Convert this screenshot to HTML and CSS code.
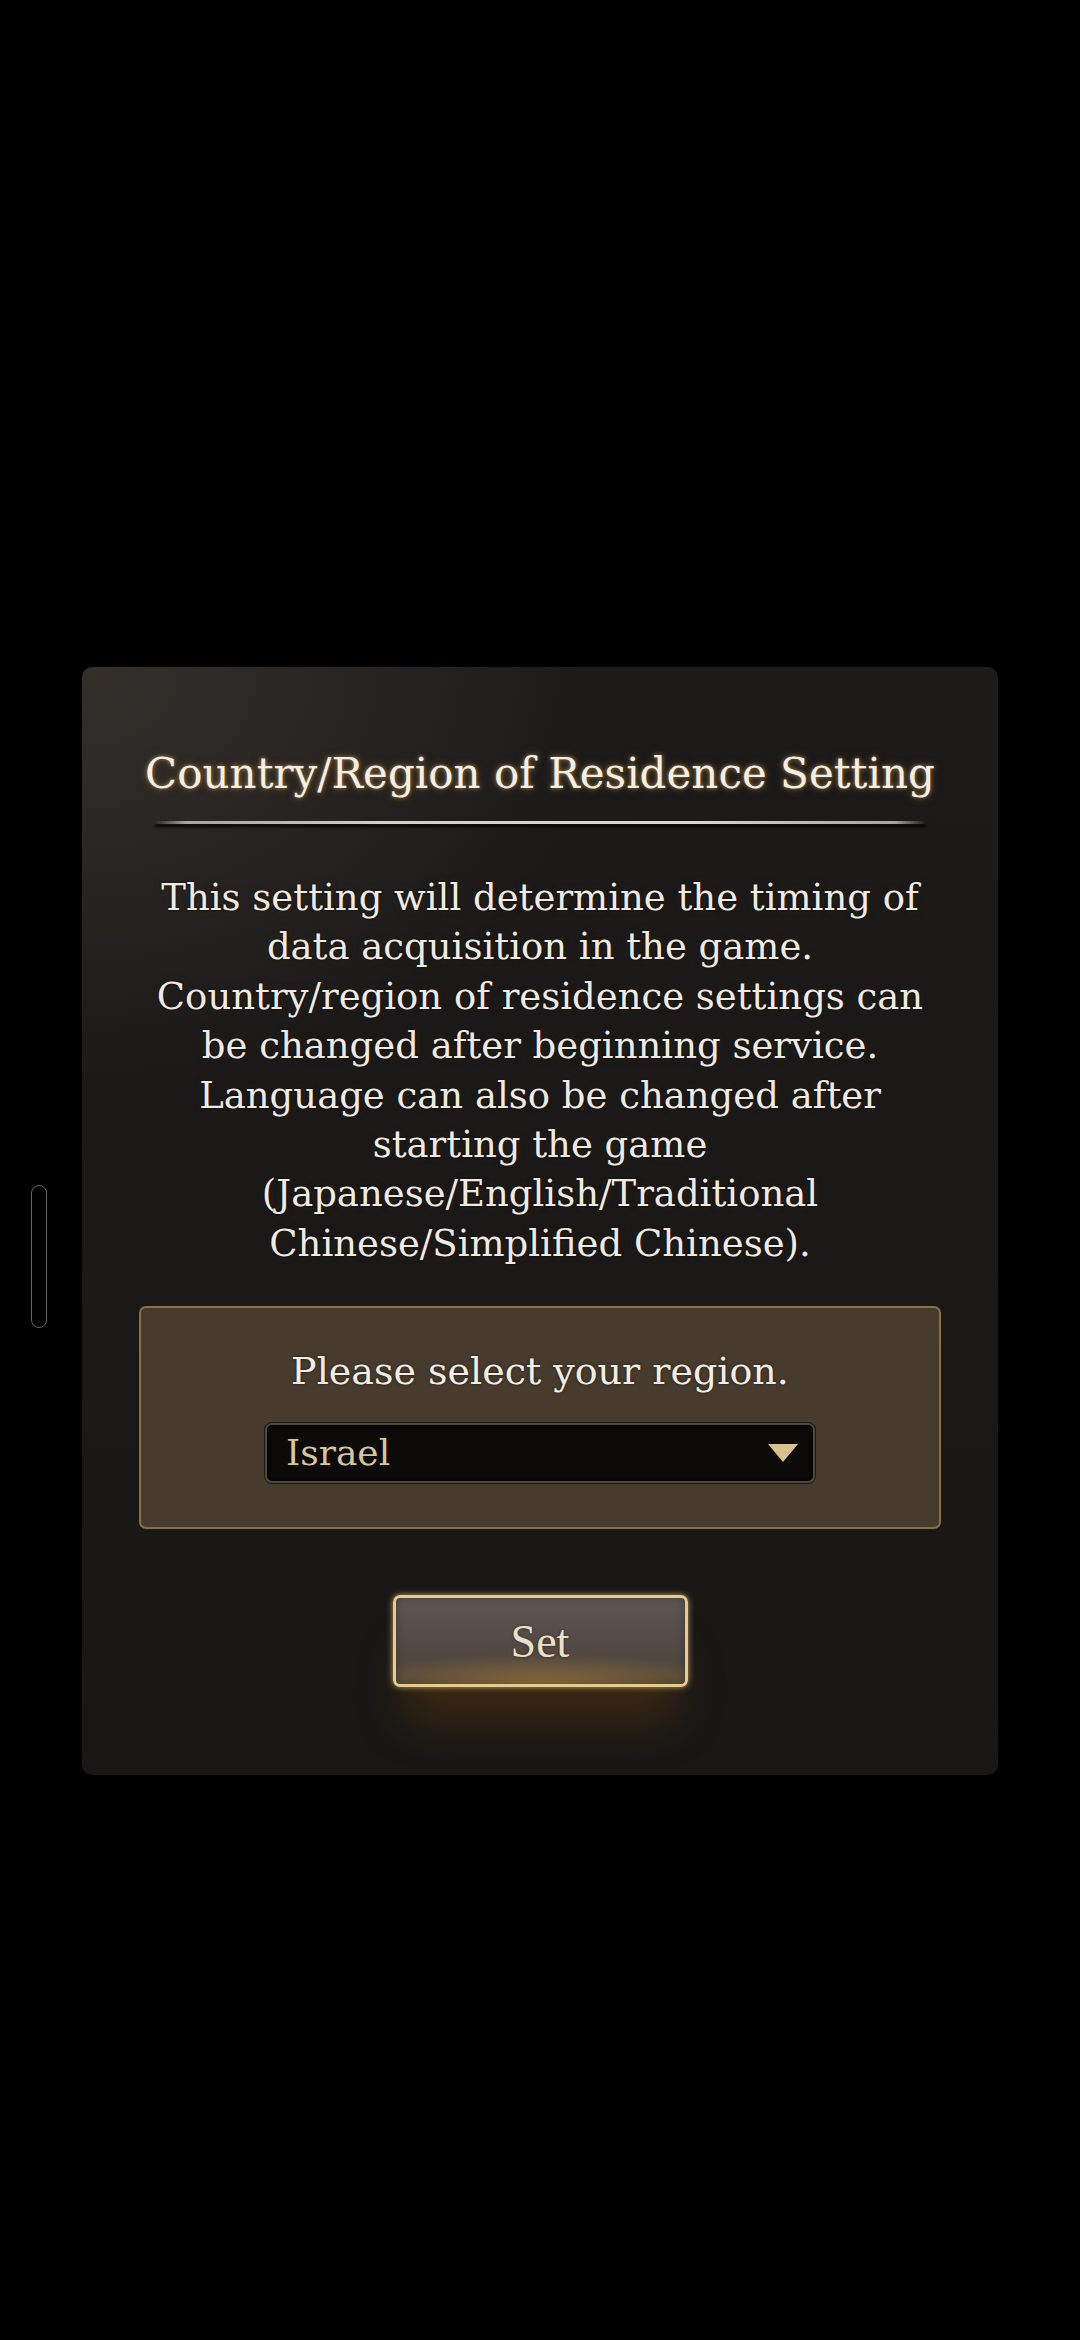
FILE: index.html
```html
<!DOCTYPE html>
<html lang="en">
<head>
<meta charset="utf-8">
<title>Country/Region of Residence Setting</title>
<link rel="stylesheet" href="styles.css">
</head>
<body>
<div class="screen">
  <div class="side-handle"></div>
  <section class="panel">
    <h1 class="title">Country/Region of Residence Setting</h1>
    <div class="separator"></div>
    <p class="desc">This setting will determine the timing of<br>data acquisition in the game.<br>Country/region of residence settings can<br>be changed after beginning service.<br>Language can also be changed after<br>starting the game<br>(Japanese/English/Traditional<br>Chinese/Simplified Chinese).</p>
    <div class="region-box">
      <div class="region-label">Please select your region.</div>
      <div class="select">
        <span class="select-value">Israel</span>
        <svg class="select-arrow" width="32" height="20" viewBox="0 0 32 20"><polygon points="1,1 31,1 16,19" fill="#d8c38f"/></svg>
      </div>
    </div>
    <button class="set-btn">Set</button>
  </section>
</div>
</body>
</html>
```

FILE: styles.css
```css
html, body {
  margin: 0;
  padding: 0;
  background: #000;
}
.screen {
  width: 1080px;
  height: 2340px;
  position: relative;
  display: flex;
  flex-direction: column;
  align-items: flex-start;
  padding-top: 667px;
  padding-left: 82px;
  box-sizing: border-box;
  font-family: "DejaVu Serif", "Liberation Serif", serif;
}
.side-handle {
  position: absolute;
  left: 31px;
  top: 1185px;
  width: 14px;
  height: 141px;
  border: 1.5px solid #666;
  border-radius: 9px;
}
.panel {
  width: 916px;
  height: 1108px;
  box-sizing: border-box;
  border-radius: 10px;
  background:
    radial-gradient(ellipse 520px 420px at 0% 0%, rgba(60,54,49,0.75), rgba(60,54,49,0) 100%),
    linear-gradient(180deg, #1c1b1a 0%, #181716 100%);
  display: flex;
  flex-direction: column;
  align-items: center;
  padding-top: 77px;
}
.title {
  margin: 0;
  font-weight: normal;
  font-size: 42px;
  line-height: 60px;
  color: #f4efe6;
  letter-spacing: 0;
  white-space: nowrap;
  text-shadow: 0 0 4px rgba(170,130,70,0.9), 0 0 8px rgba(120,90,50,0.6);
}
.separator {
  margin-top: 17px;
  width: 771px;
  height: 3px;
  background: linear-gradient(90deg, rgba(200,195,190,0) 0%, #a9a39d 4%, #d6d0ca 30%, #dcd6d0 70%, #a9a39d 96%, rgba(200,195,190,0) 100%);
  box-shadow: 0 3px 3px rgba(0,0,0,0.9);
}
.desc {
  margin: 49px 0 0;
  font-size: 37px;
  line-height: 49.4px;
  color: #efebe4;
  text-align: center;
  white-space: nowrap;
  text-shadow: 0 0 3px rgba(0,0,0,0.9), 0 0 6px rgba(60,45,30,0.7);
}
.region-box {
  margin-top: 38px;
  width: 802px;
  height: 223px;
  box-sizing: border-box;
  background: #473b2d;
  border: 2px solid #8a6f47;
  border-radius: 7px;
  display: flex;
  flex-direction: column;
  align-items: center;
  padding-top: 38px;
  gap: 27px;
}
.region-label {
  font-size: 38px;
  line-height: 50px;
  color: #f2eee7;
  white-space: nowrap;
  text-shadow: 0 0 3px rgba(0,0,0,0.6);
}
.select {
  width: 550px;
  height: 60px;
  box-sizing: border-box;
  background: #0c0b0a;
  border: 2px solid #4c4844;
  border-radius: 7px;
  box-shadow: 0 0 0 1px #1e1a15, inset 0 0 4px rgba(0,0,0,0.8);
  display: flex;
  align-items: center;
  justify-content: space-between;
  padding: 0 14px 0 19px;
}
.select-value {
  font-size: 36px;
  line-height: 40px;
  color: #d8c59c;
}
.select-arrow {
  display: block;
}
.set-btn {
  margin-top: 66px;
  width: 295px;
  height: 92px;
  box-sizing: border-box;
  border: 3px solid #e4cb8f;
  border-radius: 7px;
  background:
    radial-gradient(ellipse 200px 30px at 50% 100%, rgba(190,140,60,0.55), rgba(190,140,60,0) 100%),
    linear-gradient(180deg, #5e5753 0%, #534b46 50%, #4d4338 100%);
  box-shadow: 0 0 6px rgba(240,200,120,0.75), inset 0 0 10px rgba(0,0,0,0.25), 0 45px 45px -12px rgba(130,75,15,0.35);
  font-family: "Liberation Serif", serif;
  font-size: 46px;
  color: #ebe0c6;
  padding: 0;
  text-shadow: 0 0 3px rgba(0,0,0,0.5);
}
```
